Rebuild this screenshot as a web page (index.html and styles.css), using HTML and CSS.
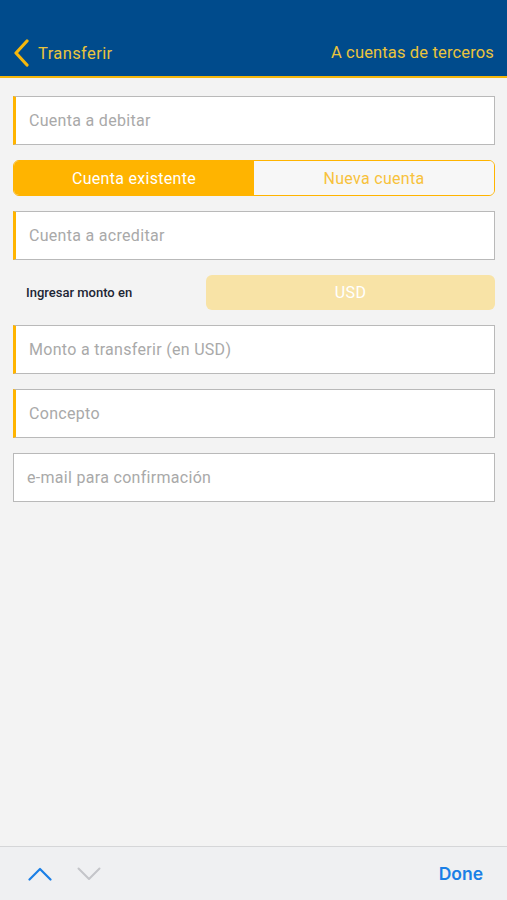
FILE: index.html
```html
<!DOCTYPE html>
<html lang="es">
<head>
    <meta charset="UTF-8">
    <meta name="viewport" content="width=device-width, initial-scale=1.0">
    <title>Transferir</title>
    <link rel="stylesheet" href="styles.css">
</head>
<body>

<div class="app">
    <header class="topbar">
        <div class="back">
            <svg class="back-icon" width="18" height="28" viewBox="0 0 18 28">
                <path d="M15 2 L4 14 L15 26" fill="none" stroke="#f6b80c" stroke-width="3.2" stroke-linecap="round" stroke-linejoin="round"/>
            </svg>
            <span>Transferir</span>
        </div>
        <div class="title">A cuentas de terceros</div>
    </header>

    <main class="form">
        <div class="field required">Cuenta a debitar</div>

        <div class="segmented">
            <div class="segment active">Cuenta existente</div>
            <div class="segment">Nueva cuenta</div>
        </div>

        <div class="field required">Cuenta a acreditar</div>

        <div class="currency-row">
            <span class="currency-label">Ingresar monto en</span>
            <div class="currency-btn">USD</div>
        </div>

        <div class="field required">Monto a transferir (en USD)</div>
        <div class="field required">Concepto</div>
        <div class="field">e-mail para confirmación</div>
    </main>

    <footer class="toolbar">
        <div class="arrows">
            <svg width="24" height="14" viewBox="0 0 24 14">
                <path d="M1.5 12.5 L12 2 L22.5 12.5" fill="none" stroke="#1a7fe6" stroke-width="2.2" stroke-linecap="round" stroke-linejoin="round"/>
            </svg>
            <svg width="24" height="14" viewBox="0 0 24 14">
                <path d="M1.5 1.5 L12 12 L22.5 1.5" fill="none" stroke="#c4c5c9" stroke-width="2" stroke-linecap="round" stroke-linejoin="round"/>
            </svg>
        </div>
        <span class="done">Done</span>
    </footer>
</div>

</body>
</html>
```

FILE: styles.css
```css
body {
    margin: 0;
    background-color: #f3f3f3;
    font-family: Roboto, "Noto Sans", sans-serif;
}
.app {
    display: flex;
    flex-direction: column;
    height: 100vh;
}
.topbar {
    height: 78px;
    box-sizing: border-box;
    background-color: #004b8c;
    border-bottom: 2px solid #f6b80c;
    display: flex;
    align-items: flex-end;
    justify-content: space-between;
    padding: 0 13px 9px 12px;
    color: #eac43c;
    font-size: 16.5px;
    letter-spacing: 0.4px;
}
.back {
    display: flex;
    align-items: center;
    gap: 8px;
}
.back-icon {
    display: block;
}
.back span {
    padding-top: 1px;
}
.title {
    padding-bottom: 5px;
    letter-spacing: 0.15px;
}
.form {
    flex: 1;
    display: flex;
    flex-direction: column;
    gap: 15px;
    padding: 18px 12px 0 13px;
}
.field {
    height: 49px;
    box-sizing: border-box;
    background-color: #fff;
    border: 1px solid #b9b9b9;
    display: flex;
    align-items: center;
    padding-left: 13px;
    color: #a9a9a9;
    font-size: 16px;
    letter-spacing: 0.3px;
}
.field.required {
    border-left: 3px solid #ffb400;
}
.segmented {
    height: 36px;
    box-sizing: border-box;
    display: grid;
    grid-template-columns: 1fr 1fr;
    border: 1px solid #ffb400;
    border-radius: 6px;
    overflow: hidden;
    font-size: 16px;
    letter-spacing: 0.3px;
}
.segment {
    display: flex;
    align-items: center;
    justify-content: center;
    color: #f7c23c;
    background-color: #f7f7f7;
}
.segment.active {
    background-color: #ffb400;
    color: #fff;
}
.currency-row {
    height: 35px;
    display: flex;
    align-items: center;
}
.currency-label {
    width: 180px;
    padding-left: 13px;
    font-size: 13px;
    font-weight: 500;
    color: #1d2635;
}
.currency-btn {
    flex: 1;
    height: 35px;
    border-radius: 6px;
    background-color: #f8e3a6;
    color: #fff;
    display: flex;
    align-items: center;
    justify-content: center;
    font-size: 16px;
    letter-spacing: 0.4px;
}
.toolbar {
    height: 54px;
    box-sizing: border-box;
    background-color: #eff0f2;
    border-top: 1px solid #d5d6d8;
    display: flex;
    align-items: center;
    justify-content: space-between;
    padding: 0 24px 0 28px;
}
.arrows {
    display: flex;
    gap: 25px;
}
.arrows svg {
    display: block;
}
.done {
    font-family: Inter, "Liberation Sans", sans-serif;
    font-weight: 600;
    font-size: 17.5px;
    color: #1a7fe6;
}
```
